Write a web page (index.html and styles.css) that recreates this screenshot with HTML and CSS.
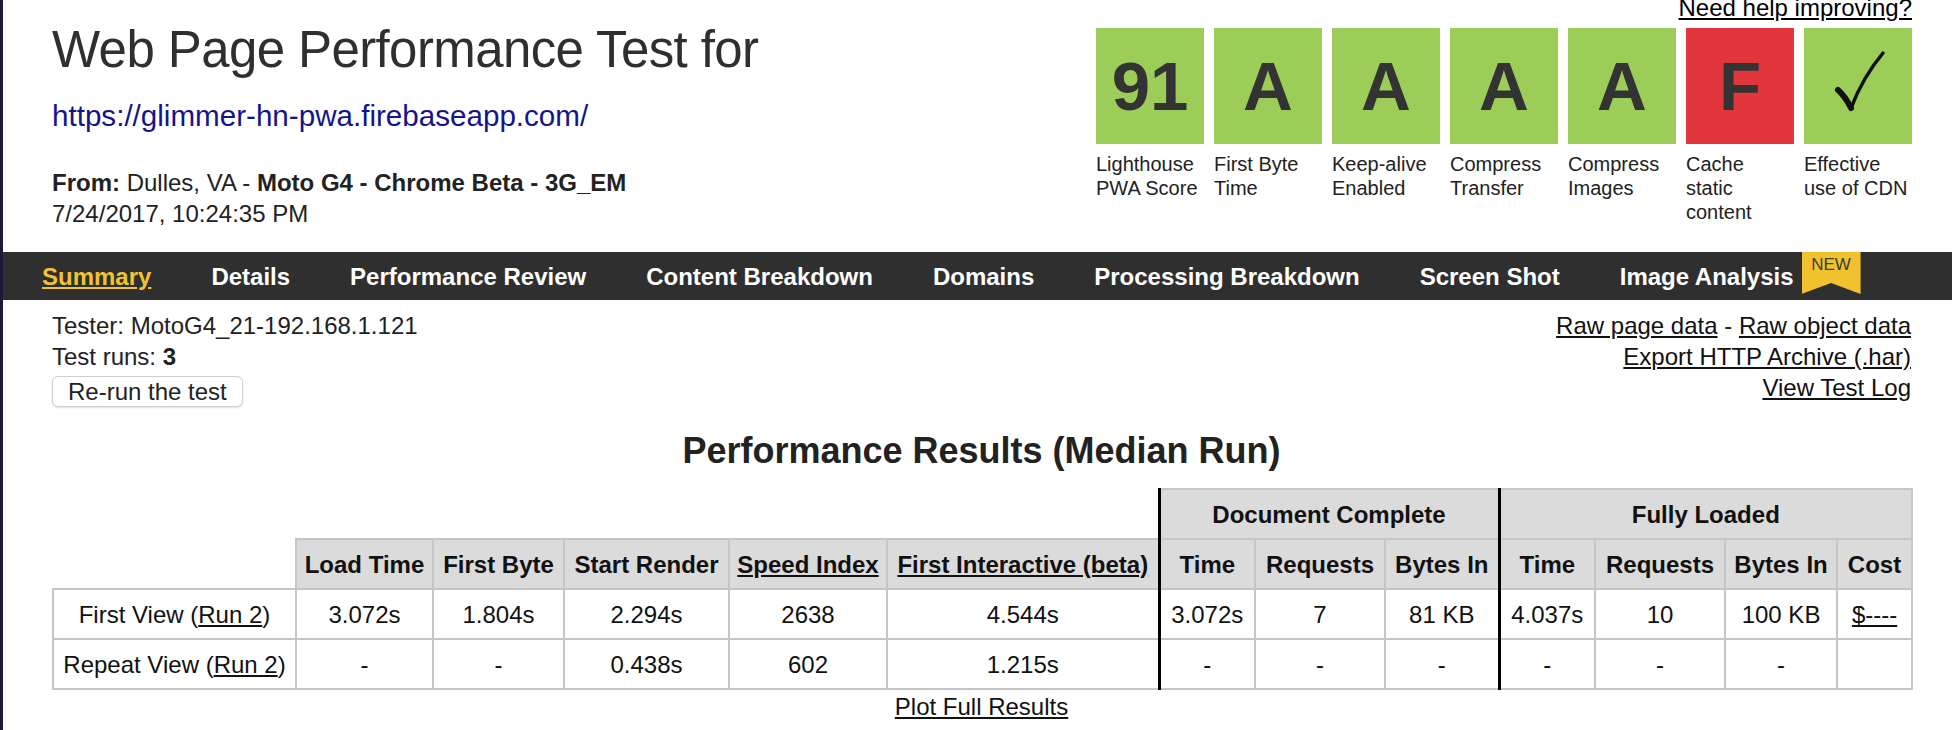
FILE: index.html
```html
<!DOCTYPE html>
<html lang="en">
<head>
<meta charset="utf-8">
<title>WebPagetest Test Result</title>
<link rel="stylesheet" href="styles.css">
</head>
<body>
<header class="header">
  <div class="test-info">
    <h1 class="title">Web Page Performance Test for</h1>
    <a class="url" href="#">https://glimmer-hn-pwa.firebaseapp.com/</a>
    <p class="line from"><b>From:</b> Dulles, VA - <b>Moto G4 - Chrome Beta - 3G_EM</b></p>
    <p class="line">7/24/2017, 10:24:35 PM</p>
  </div>
  <div class="grades">
    <a class="help" href="#">Need help improving?</a>
    <div class="grade-row">
      <div class="grade"><div class="grade-box">91</div><div class="grade-label">Lighthouse<br>PWA Score</div></div>
      <div class="grade"><div class="grade-box">A</div><div class="grade-label">First Byte<br>Time</div></div>
      <div class="grade"><div class="grade-box">A</div><div class="grade-label">Keep-alive<br>Enabled</div></div>
      <div class="grade"><div class="grade-box">A</div><div class="grade-label">Compress<br>Transfer</div></div>
      <div class="grade"><div class="grade-box">A</div><div class="grade-label">Compress<br>Images</div></div>
      <div class="grade"><div class="grade-box red">F</div><div class="grade-label">Cache<br>static<br>content</div></div>
      <div class="grade"><div class="grade-box">
        <svg class="check" width="108" height="116" viewBox="0 0 108 116">
          <path d="M34 62 Q41 68 47 80" fill="none" stroke="#111" stroke-width="6" stroke-linecap="round"/>
          <path d="M47 80 Q59 49 79 25" fill="none" stroke="#111" stroke-width="3.5" stroke-linecap="round"/>
        </svg>
      </div><div class="grade-label">Effective<br>use of CDN</div></div>
    </div>
  </div>
</header>

<nav class="nav">
  <a class="nav-link active" href="#">Summary</a>
  <a class="nav-link" href="#">Details</a>
  <a class="nav-link" href="#">Performance Review</a>
  <a class="nav-link" href="#">Content Breakdown</a>
  <a class="nav-link" href="#">Domains</a>
  <a class="nav-link" href="#">Processing Breakdown</a>
  <a class="nav-link" href="#">Screen Shot</a>
  <span class="nav-new">
    <a class="nav-link" href="#">Image Analysis</a>
    <span class="badge">NEW</span>
  </span>
</nav>

<main class="content">
  <div class="info">
    <div class="info-left">
      <p class="line">Tester: MotoG4_21-192.168.1.121</p>
      <p class="line">Test runs: <b>3</b></p>
      <button class="rerun" type="button">Re-run the test</button>
    </div>
    <div class="info-right">
      <div><a href="#">Raw page data</a> - <a href="#">Raw object data</a></div>
      <div><a href="#">Export HTTP Archive (.har)</a></div>
      <div><a href="#">View Test Log</a></div>
    </div>
  </div>

  <h2 class="results-title">Performance Results (Median Run)</h2>

  <table class="results">
    <colgroup>
      <col class="c-label">
      <col class="c-load">
      <col class="c-byte">
      <col class="c-render">
      <col class="c-speed">
      <col class="c-inter">
      <col class="c-dtime">
      <col class="c-dreq">
      <col class="c-dbytes">
      <col class="c-ftime">
      <col class="c-freq">
      <col class="c-fbytes">
      <col class="c-cost">
    </colgroup>
    <thead>
      <tr>
        <th class="blank" colspan="6"></th>
        <th class="sep" colspan="3">Document Complete</th>
        <th class="sep" colspan="4">Fully Loaded</th>
      </tr>
      <tr>
        <th class="blank"></th>
        <th>Load Time</th>
        <th>First Byte</th>
        <th>Start Render</th>
        <th><a href="#">Speed Index</a></th>
        <th><a href="#">First Interactive (beta)</a></th>
        <th class="sep">Time</th>
        <th>Requests</th>
        <th>Bytes In</th>
        <th class="sep">Time</th>
        <th>Requests</th>
        <th>Bytes In</th>
        <th>Cost</th>
      </tr>
    </thead>
    <tbody>
      <tr>
        <td>First View (<a href="#">Run 2</a>)</td>
        <td>3.072s</td>
        <td>1.804s</td>
        <td>2.294s</td>
        <td>2638</td>
        <td>4.544s</td>
        <td class="sep">3.072s</td>
        <td>7</td>
        <td>81 KB</td>
        <td class="sep">4.037s</td>
        <td>10</td>
        <td>100 KB</td>
        <td><a href="#">$----</a></td>
      </tr>
      <tr>
        <td>Repeat View (<a href="#">Run 2</a>)</td>
        <td>-</td>
        <td>-</td>
        <td>0.438s</td>
        <td>602</td>
        <td>1.215s</td>
        <td class="sep">-</td>
        <td>-</td>
        <td>-</td>
        <td class="sep">-</td>
        <td>-</td>
        <td>-</td>
        <td></td>
      </tr>
    </tbody>
  </table>

  <div class="plot"><a href="#">Plot Full Results</a></div>
</main>
</body>
</html>
```

FILE: styles.css
```css
html, body {
  margin: 0;
  padding: 0;
}

body {
  border-left: 3px solid #1d1b3c;
  min-height: 730px;
  box-sizing: border-box;
  background: #fff;
  color: #222;
  font-family: "Liberation Sans", Arial, sans-serif;
  font-size: 24px;
  line-height: 31px;
}

a {
  color: #111;
}

/* ---------- header ---------- */
.header {
  display: flex;
  justify-content: space-between;
  align-items: flex-start;
  height: 252px;
  box-sizing: border-box;
  padding: 0 40px 0 49px;
}

.title {
  margin: 0;
  padding-top: 20px;
  font-size: 51px;
  line-height: 60px;
  font-weight: normal;
  color: #2f2f2f;
  letter-spacing: -0.6px;
}

.url {
  display: block;
  margin-top: 18px;
  font-size: 29.6px;
  line-height: 36px;
  color: #14148c;
  text-decoration: none;
}

.line {
  margin: 0;
  font-size: 24px;
  line-height: 31px;
}

.from {
  margin-top: 33px;
}

.grades {
  display: flex;
  flex-direction: column;
  align-items: flex-end;
  width: 816px;
}

.help {
  margin-top: -6px;
  font-size: 24px;
  line-height: 28px;
  color: #000;
}

.grade-row {
  display: flex;
  gap: 10px;
  margin-top: 6px;
}

.grade {
  width: 108px;
}

.grade-box {
  height: 116px;
  display: flex;
  align-items: center;
  justify-content: center;
  background: #9bcd58;
  color: #333;
  font-size: 69px;
  font-weight: bold;
  line-height: 1;
}

.grade-box.red {
  background: #e1363b;
}

.check {
  display: block;
}

.grade-label {
  margin-top: 8px;
  font-size: 20px;
  line-height: 24px;
  color: #222;
}

/* ---------- nav ---------- */
.nav {
  display: flex;
  align-items: center;
  gap: 60px;
  height: 48px;
  padding-left: 39px;
  background: #2f2f2f;
}

.nav-link {
  color: #fff;
  font-size: 24px;
  font-weight: bold;
  text-decoration: none;
}

.nav-link.active {
  color: #f1c232;
  text-decoration: underline;
}

.nav-new {
  display: flex;
  align-self: stretch;
  align-items: center;
  gap: 8px;
}

.badge {
  align-self: flex-start;
  width: 59px;
  height: 42px;
  box-sizing: border-box;
  padding-top: 3px;
  background: #f2c12e;
  color: #3e3e30;
  font-size: 17px;
  line-height: 20px;
  text-align: center;
  clip-path: polygon(0 0, 100% 0, 100% 100%, 50% 74%, 0 100%);
}

/* ---------- content ---------- */
.content {
  padding: 10px 41px 0 49px;
}

.info {
  display: flex;
  justify-content: space-between;
  align-items: flex-start;
}

.info-right {
  text-align: right;
}

.rerun {
  display: block;
  margin-top: 4px;
  height: 31px;
  padding: 0 15px;
  border: 1px solid #cfcfcf;
  border-radius: 6px;
  background: #fff;
  box-shadow: 0 1px 2px rgba(0, 0, 0, 0.12);
  color: #222;
  font-family: inherit;
  font-size: 24px;
  line-height: 29px;
}

.results-title {
  margin: 23px 0 0;
  font-size: 36px;
  line-height: 42px;
  font-weight: bold;
  text-align: center;
  color: #222;
}

/* ---------- table ---------- */
.results {
  margin-top: 16px;
  width: 1859px;
  border-collapse: collapse;
  table-layout: fixed;
  font-size: 24px;
  color: #111;
}

.c-label { width: 243px; }
.c-load { width: 137px; }
.c-byte { width: 131px; }
.c-render { width: 165px; }
.c-speed { width: 158px; }
.c-inter { width: 272px; }
.c-dtime { width: 96px; }
.c-dreq { width: 130px; }
.c-dbytes { width: 114px; }
.c-ftime { width: 96px; }
.c-freq { width: 130px; }
.c-fbytes { width: 112px; }
.c-cost { width: 75px; }

.results tr {
  height: 50px;
}

.results th,
.results td {
  padding: 0 4px;
  border: 2px solid #c6c6c6;
  text-align: center;
  vertical-align: middle;
  white-space: nowrap;
}

.results th {
  background: #dbdbdb;
  font-weight: bold;
}

.results th.blank {
  background: #fff;
  border: none;
}

.results .sep {
  border-left: 3px solid #000;
}

.plot {
  margin-top: 1px;
  text-align: center;
  line-height: 31px;
}
```
